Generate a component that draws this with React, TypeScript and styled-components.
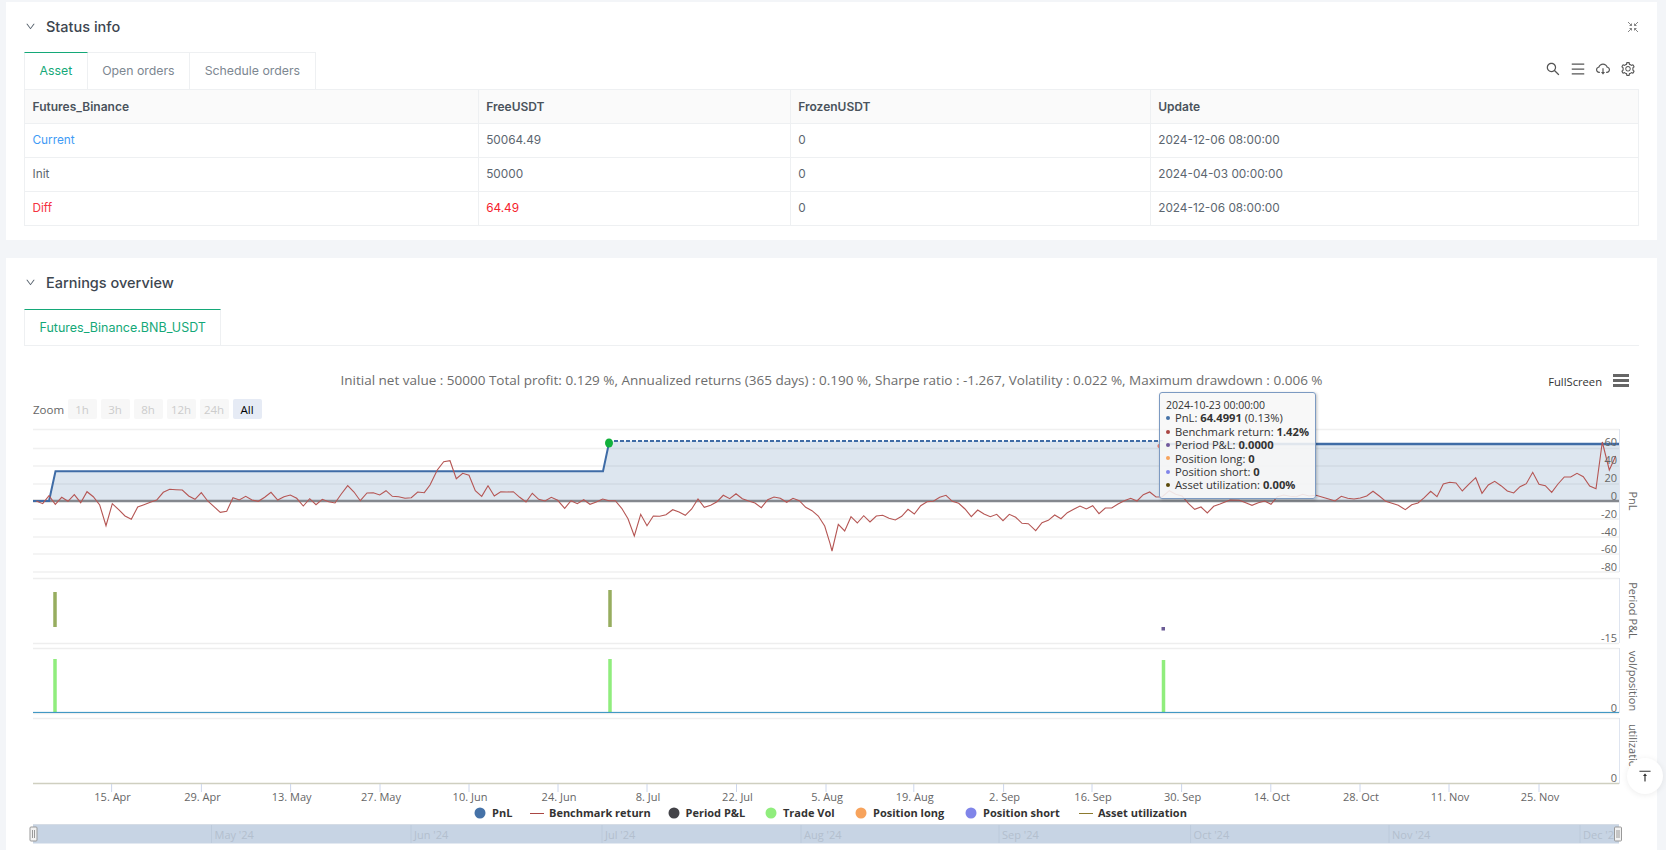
import React from "react";
import styled, { createGlobalStyle } from "styled-components";
import {
  AiOutlineCloudDownload,
  AiOutlineDown,
  AiOutlineMenu,
  AiOutlineSearch,
  AiOutlineSetting,
  AiOutlineVerticalAlignTop,
} from "react-icons/ai";

const GlobalStyle = createGlobalStyle`
  html, body {
    margin: 0;
    height: 850px;
    overflow: hidden;
    background: #f3f5f8;
    font-family: Inter, "Liberation Sans", sans-serif;
  }
`;

const chartFont = `"Open Sans", "Liberation Sans", sans-serif`;

const Page = styled.div`
  position: relative;
  height: 850px;
  padding: 2px 9px 0 6px;
  box-sizing: border-box;
  display: flex;
  flex-direction: column;
  gap: 18px;
  overflow: hidden;
`;

const Card = styled.section<{ $grow?: boolean }>`
  background: #fff;
  padding: 0 18px 14.5px;
  flex: ${(p) => (p.$grow ? "1" : "none")};
`;

const CardHeader = styled.header`
  height: 50px;
  box-sizing: border-box;
  padding-bottom: 1px;
  display: flex;
  align-items: center;
  gap: 10px;
  color: #3d4650;
  font-size: 14.5px;
  font-weight: 500;
  svg {
    margin-left: 1px;
    margin-right: 0;
    color: #5a6570;
    font-size: 11px;
  }
`;

const CollapseIcon = styled.svg`
  margin-left: auto !important;
  margin-right: 0 !important;
  width: 12px;
  height: 12px;
  stroke: #777;
  stroke-width: 0.9;
  fill: none;
`;

const TabRow = styled.div<{ $line?: boolean; $offset?: number }>`
  display: flex;
  align-items: flex-start;
  height: ${(p) => (p.$line ? 36 : 37)}px;
  margin-top: ${(p) => p.$offset ?? 0}px;
  font-size: ${(p) => (p.$line ? 12.5 : 12.3)}px;
  border-bottom: ${(p) => (p.$line ? "1px solid #eef0f2" : "none")};
`;

const Tab = styled.div<{ $active?: boolean }>`
  height: 100%;
  box-sizing: border-box;
  padding: 0 14.5px 1px;
  display: flex;
  align-items: center;
  color: ${(p) => (p.$active ? "#14a878" : "#7d8791")};
  border: 1px solid #eef0f2;
  border-left-width: ${(p) => (p.$active ? 1 : 0)}px;
  border-bottom: none;
  border-top: ${(p) => (p.$active ? "1px solid #14a878" : "1px solid #eef0f2")};
`;

const ToolIcons = styled.div`
  margin-left: auto;
  display: flex;
  gap: 9px;
  padding: 9px 3px 0 0;
  color: #555;
  font-size: 16px;
  line-height: 0;
`;

const Table = styled.table`
  width: 100%;
  border-collapse: collapse;
  table-layout: fixed;
  font-size: 11.8px;
  color: #5c6670;
`;

const HeadCell = styled.th`
  height: 32.5px;
  padding: 0 7.5px;
  text-align: left;
  font-size: 12px;
  font-weight: 600;
  color: #4a535c;
  background: #fafafa;
  border: 1px solid #eef0f2;
`;

const Cell = styled.td<{ $tone?: string }>`
  height: 33px;
  padding: 0 7.5px;
  color: ${(p) => p.$tone ?? "#5c6670"};
  border: 1px solid #eef0f2;
`;

const ChartArea = styled.div`
  position: relative;
`;

const SummaryRow = styled.div`
  display: grid;
  grid-template-columns: 1fr auto 1fr;
  align-items: center;
  height: 20px;
  padding-top: 24px;
  font-family: ${chartFont};
`;

const SummaryText = styled.div`
  grid-column: 2;
  font-size: 13.5px;
  color: #6d6d6d;
  white-space: nowrap;
`;

const ChartMenu = styled.div`
  grid-column: 3;
  justify-self: end;
  display: flex;
  align-items: center;
  gap: 11px;
  padding-right: 10px;
  font-size: 11.2px;
  color: #333;
  span {
    padding-top: 2px;
  }
`;

const MenuBars = styled.div`
  width: 16px;
  height: 13px;
  display: flex;
  flex-direction: column;
  justify-content: space-between;
  i {
    height: 3px;
    background: #666;
  }
`;

const RangeRow = styled.div`
  display: flex;
  align-items: center;
  gap: 4px;
  height: 20px;
  margin-top: 9px;
  padding-left: 9px;
  font-family: ${chartFont};
  font-size: 11.5px;
`;

const RangeLabel = styled.span`
  width: 30.5px;
  color: #666;
`;

const RangeButton = styled.span<{ $active?: boolean }>`
  width: 29px;
  height: 20px;
  display: flex;
  align-items: center;
  justify-content: center;
  border-radius: 2px;
  color: ${(p) => (p.$active ? "#000" : "#ccc")};
  background: ${(p) => (p.$active ? "#e6ebf5" : "#f7f7f7")};
`;

const ChartSvg = styled.svg`
  display: block;
  margin-top: 5px;
  overflow: visible;
  font-family: ${chartFont};
`;

const Tooltip = styled.div`
  position: absolute;
  left: 1135px;
  top: 46px;
  width: 157px;
  height: 107px;
  box-sizing: border-box;
  padding: 6px 0 0 6px;
  font-family: ${chartFont};
  font-size: 11.2px;
  line-height: 13.4px;
  color: #333;
  background: rgba(247, 247, 247, 0.88);
  border: 1px solid #7c9ac2;
  border-radius: 3px;
  box-shadow: 1px 1px 3px rgba(0, 0, 0, 0.25);
  white-space: nowrap;
`;

const TipDate = styled.div`
  font-size: 10.5px;
  line-height: 12.4px;
`;

const TipRow = styled.div`
  display: flex;
  align-items: center;
  gap: 5px;
  span {
    display: block;
  }
  b {
    font-weight: 700;
  }
`;

const TipDot = styled.i<{ $color: string }>`
  width: 4px;
  height: 4px;
  border-radius: 50%;
  background: ${(p) => p.$color};
  flex: none;
`;

const BackTop = styled.div`
  position: absolute;
  left: 1627px;
  top: 758px;
  width: 36px;
  height: 36px;
  border-radius: 50%;
  background: #fff;
  box-shadow: 0 1px 6px rgba(0, 0, 0, 0.08);
  display: flex;
  align-items: center;
  justify-content: center;
  color: #333;
  font-size: 16px;
`;

type Seg = [number, number, [number, number][]];

// traced from the picture, crops were 3x so x/y are divided back
const benchmark: Seg[] = [
  [30, 440, [[19,183],[38,191],[57,167],[76,193],[95,172],[114,184],[133,164],[152,188],[171,155],[190,170],[209,195],[228,257],[247,191],[266,209],[285,228],[304,238],[323,201],[342,194],[361,187],[380,180],[400,157],[419,148],[438,149],[457,150],[476,168],[495,178],[514,158],[533,183],[552,200],[571,217],[590,214],[609,173],[628,180],[647,169],[666,180],[685,184],[704,172],[723,157],[743,180],[762,170],[781,165],[800,175],[820,198],[839,176],[858,194],[877,178],[896,185],[915,189],[934,162],[953,137],[972,156],[991,182],[1011,159],[1030,158],[1049,165],[1068,152],[1087,169],[1106,170],[1125,175],[1144,173],[1163,156],[1183,158]]],
  [430, 440, [[0,135],[22,90],[41,65],[60,62],[79,116],[98,100],[117,106],[136,152],[155,169],[174,137],[193,168],[212,155],[231,156],[250,155],[269,172],[288,186],[307,160],[326,178],[345,183],[364,172],[383,181],[404,205],[423,182],[442,191],[461,179],[480,193],[499,186],[518,177],[537,182],[556,182],[575,205],[594,236],[613,288],[632,223],[651,257],[670,228],[689,229],[708,224],[728,209],[747,216],[766,226],[785,207],[804,177],[823,202],[842,196],[861,185],[880,166],[899,176],[918,161],[937,176],[956,183],[975,189],[994,203],[1013,179],[1032,171],[1051,175],[1070,187],[1089,175],[1108,182],[1127,202],[1146,212],[1165,228],[1184,258]]],
  [830, 440, [[0,310],[6,333],[25,253],[44,273],[63,230],[82,249],[101,227],[120,246],[139,228],[158,226],[177,235],[196,240],[215,229],[234,208],[253,222],[272,197],[291,185],[310,184],[329,172],[348,166],[367,184],[386,190],[405,207],[424,230],[443,210],[462,222],[481,230],[500,223],[519,242],[538,223],[557,232],[576,250],[595,251],[617,272],[636,248],[655,241],[674,225],[693,236],[712,218],[731,208],[750,198],[769,207],[788,197],[807,221],[826,204],[845,204],[864,192],[883,182],[902,175],[921,183],[940,164],[959,156],[978,171],[997,170],[1018,152],[1037,163],[1056,168],[1075,190],[1094,208],[1113,201],[1132,219],[1151,199],[1170,192]]],
  [1230, 430, [[0,210],[28,211],[47,218],[66,226],[85,218],[104,213],[123,223],[142,200],[161,195],[180,199],[199,200],[218,193],[237,198],[258,196],[296,207],[315,213],[334,199],[353,205],[372,207],[391,204],[410,198],[429,184],[448,198],[467,214],[486,220],[505,226],[526,239],[545,224],[564,219],[583,203],[602,184],[621,200],[640,162],[659,157],[678,159],[697,183],[716,163],[737,143],[756,190],[775,165],[794,154],[813,167],[832,183],[851,189],[870,170],[889,161],[908,127],[927,163],[946,167],[965,187],[984,162],[1003,141],[1022,141],[1041,130],[1060,140],[1079,168],[1098,176],[1117,36],[1138,120],[1157,78]]],
];

const benchmarkPoints = benchmark
  .flatMap(([ox, oy, pts]) => pts.map(([x, y]) => `${(ox + x / 3).toFixed(1)},${(oy + y / 3).toFixed(1)}`))
  .join(" ");

const gridLines = [429.5, 448.5, 466, 484, 519, 537, 554, 572];
const paneLines = [578.5, 643.5, 648.5, 713.5, 718.5];
const ticks: [number, string][] = [
  [111.6, "15. Apr"], [201.4, "29. Apr"], [290.6, "13. May"], [380, "27. May"], [469, "10. Jun"], [558, "24. Jun"],
  [647, "8. Jul"], [736.5, "22. Jul"], [826, "5. Aug"], [913.8, "19. Aug"], [1003.6, "2. Sep"], [1092, "16. Sep"],
  [1181.6, "30. Sep"], [1270.8, "14. Oct"], [1360, "28. Oct"], [1449, "11. Nov"], [1539, "25. Nov"],
];
const yLabels: [number, string][] = [
  [446, "60"], [464, "40"], [482, "20"], [500, "0"], [518, "-20"], [536, "-40"], [553, "-60"], [571, "-80"],
  [642, "-15"], [712, "0"], [782, "0"],
];
const navLabels: [number, string][] = [
  [211.5, "May '24"], [411, "Jun '24"], [602, "Jul '24"], [801, "Aug '24"], [999, "Sep '24"], [1190.6, "Oct '24"], [1389, "Nov '24"], [1580, "Dec '24"],
];
const legendDots: [number, string, number, string][] = [
  [480, "#4572a7", 492, "PnL"],
  [674, "#434348", 685.5, "Period P&L"],
  [771, "#90ed7d", 783, "Trade Vol"],
  [861, "#f7a35c", 873, "Position long"],
  [971, "#8085e9", 983, "Position short"],
];
const bars: [number, number, number, string][] = [
  [55, 592, 35, "#97ad5f"],
  [610, 590, 37, "#97ad5f"],
  [55, 659, 53, "#90ed7d"],
  [610, 659, 53, "#90ed7d"],
  [1163.5, 660, 52, "#90ed7d"],
];
const axisTitles: [number, string][] = [
  [501, "PnL"], [610.5, "Period P&L"], [681, "vol/position"], [750, "utilizatio..."],
];
const tipRows: [string, React.ReactNode][] = [
  ["#4572a7", <>PnL: <b>64.4991</b> (0.13%)</>],
  ["#aa4643", <>Benchmark return: <b>1.42%</b></>],
  ["#6f5a9b", <>Period P&L: <b>0.0000</b></>],
  ["#f7a35c", <>Position long: <b>0</b></>],
  ["#8085e9", <>Position short: <b>0</b></>],
  ["#5b4a0a", <>Asset utilization: <b>0.00%</b></>],
];

function Handle({ x }: { x: number }) {
  return (
    <g>
      <rect x={x} y={827} width={7} height={14} rx={1} fill="#f2f2f2" stroke="#999" />
      <path d={`M${x + 2.5} 830V838M${x + 4.5} 830V838`} stroke="#999" />
    </g>
  );
}

function Chart() {
  return (
    <ChartSvg width={1615} height={426} viewBox="24 424 1615 426">
      {gridLines.map((y) => (
        <line key={y} x1={33} x2={1619} y1={y} y2={y} stroke="#f0f0f0" strokeWidth={1.5} />
      ))}
      {paneLines.map((y) => (
        <line key={y} x1={33} x2={1619} y1={y} y2={y} stroke="#eeeeee" strokeWidth={1.5} />
      ))}
      <path d="M1619.5 429V572M1619.5 578V643M1619.5 648V713M1619.5 718V784" stroke="#dfe5f0" fill="none" />

      <path d="M33 501H49L55.5 471.3H603L609 441H1163V444H1619V501Z" fill="#4572a7" fillOpacity={0.18} />
      <line x1={33} x2={1619} y1={501} y2={501} stroke="#84888e" strokeWidth={2.5} />
      <path d="M33 501H49L55.5 471.3H603L609 443" stroke="#3f6ca6" strokeWidth={2} fill="none" />
      <line x1={614} x2={1163} y1={441} y2={441} stroke="#3f6ca6" strokeWidth={2} strokeDasharray="4 2" />
      <line x1={1163} x2={1619} y1={444} y2={444} stroke="#3f6ca6" strokeWidth={2.5} />
      <polyline points={benchmarkPoints} fill="none" stroke="#b55654" strokeWidth={1.1} />
      <ellipse cx={609} cy={443} rx={4} ry={4.5} fill="#12b13c" />
      <circle cx={1159.5} cy={446} r={2} fill="#e8433d" />
      <circle cx={1164} cy={446} r={5.5} fill="#cfe8c8" />

      {bars.map(([x, y, h, color]) => (
        <rect key={`${x}-${y}`} x={x - 1.75} y={y} width={3.5} height={h} fill={color} />
      ))}
      <rect x={1161.5} y={627} width={3.5} height={3.5} fill="#6b5b95" />
      <line x1={33} x2={1619} y1={712.4} y2={712.4} stroke="#2b8cbe" strokeWidth={1} />
      <line x1={33} x2={1619} y1={783.5} y2={783.5} stroke="#cfcfc0" strokeWidth={1.5} />

      {ticks.map(([x, label]) => (
        <g key={label}>
          <line x1={x} x2={x} y1={784} y2={792} stroke="#ccd6eb" />
          <text x={x + 1} y={801} textAnchor="middle" fontSize={11} fill="#666">{label}</text>
        </g>
      ))}
      {yLabels.map(([y, label]) => (
        <text key={`${y}${label}`} x={1617} y={y} textAnchor="end" fontSize={11} fill="#666">{label}</text>
      ))}
      {axisTitles.map(([y, label]) => (
        <text key={label} transform={`translate(1628.5 ${y}) rotate(90)`} textAnchor="middle" fontSize={11} fill="#666">{label}</text>
      ))}

      {legendDots.map(([cx, color, tx, label]) => (
        <g key={label}>
          <ellipse cx={cx} cy={813} rx={5.5} ry={5.5} fill={color} />
          <text x={tx} y={817} fontSize={11} fontWeight={700} fill="#333">{label}</text>
        </g>
      ))}
      <line x1={530} x2={544} y1={813.5} y2={813.5} stroke="#aa4643" />
      <text x={549} y={817} fontSize={11} fontWeight={700} fill="#333">Benchmark return</text>
      <line x1={1079} x2={1093} y1={813.5} y2={813.5} stroke="#8c7a2e" />
      <text x={1098} y={817} fontSize={11} fontWeight={700} fill="#333">Asset utilization</text>

      <rect x={33} y={824.5} width={1586} height={19} fill="#c7d4e4" />
      <line x1={33} x2={1619} y1={824.5} y2={824.5} stroke="#d5dce5" />
      {navLabels.map(([x, label]) => (
        <g key={label}>
          <line x1={x} x2={x} y1={825} y2={843} stroke="#bccadb" />
          <text x={x + 3} y={839} fontSize={11} fill="#b3bfce">{label}</text>
        </g>
      ))}
      <Handle x={30} />
      <Handle x={1614.5} />
    </ChartSvg>
  );
}

export default function App() {
  return (
    <>
      <GlobalStyle />
      <Page>
        <Card>
          <CardHeader>
            <AiOutlineDown />
            Status info
            <CollapseIcon viewBox="0 0 12 12">
              <path d="M1 1L4.5 4.5M4.5 2.5V4.5H2.5M11 1L7.5 4.5M7.5 2.5V4.5H9.5M1 11L4.5 7.5M4.5 9.5V7.5H2.5M11 11L7.5 7.5M7.5 9.5V7.5H9.5" />
            </CollapseIcon>
          </CardHeader>
          <TabRow>
            <Tab $active>Asset</Tab>
            <Tab>Open orders</Tab>
            <Tab>Schedule orders</Tab>
            <ToolIcons>
              <AiOutlineSearch />
              <AiOutlineMenu />
              <AiOutlineCloudDownload />
              <AiOutlineSetting />
            </ToolIcons>
          </TabRow>
          <Table>
            <colgroup>
              <col width="453.7" />
              <col width="312" />
              <col width="360" />
              <col />
            </colgroup>
            <thead>
              <tr>
                <HeadCell>Futures_Binance</HeadCell>
                <HeadCell>FreeUSDT</HeadCell>
                <HeadCell>FrozenUSDT</HeadCell>
                <HeadCell>Update</HeadCell>
              </tr>
            </thead>
            <tbody>
              <tr>
                <Cell $tone="#3f9bf5">Current</Cell>
                <Cell>50064.49</Cell>
                <Cell>0</Cell>
                <Cell>2024-12-06 08:00:00</Cell>
              </tr>
              <tr>
                <Cell>Init</Cell>
                <Cell>50000</Cell>
                <Cell>0</Cell>
                <Cell>2024-04-03 00:00:00</Cell>
              </tr>
              <tr>
                <Cell $tone="#f5333f">Diff</Cell>
                <Cell $tone="#f5222d">64.49</Cell>
                <Cell>0</Cell>
                <Cell>2024-12-06 08:00:00</Cell>
              </tr>
            </tbody>
          </Table>
        </Card>
        <Card $grow>
          <CardHeader>
            <AiOutlineDown />
            Earnings overview
          </CardHeader>
          <TabRow $line $offset={1}>
            <Tab $active>Futures_Binance.BNB_USDT</Tab>
          </TabRow>
          <ChartArea>
            <SummaryRow>
              <SummaryText>
                Initial net value : 50000 Total profit: 0.129 %, Annualized returns (365 days) : 0.190 %, Sharpe ratio : -1.267, Volatility : 0.022 %, Maximum drawdown : 0.006 %
              </SummaryText>
              <ChartMenu>
                <span>FullScreen</span>
                <MenuBars>
                  <i />
                  <i />
                  <i />
                </MenuBars>
              </ChartMenu>
            </SummaryRow>
            <RangeRow>
              <RangeLabel>Zoom</RangeLabel>
              <RangeButton>1h</RangeButton>
              <RangeButton>3h</RangeButton>
              <RangeButton>8h</RangeButton>
              <RangeButton>12h</RangeButton>
              <RangeButton>24h</RangeButton>
              <RangeButton $active>All</RangeButton>
            </RangeRow>
            <Chart />
            <Tooltip>
              <TipDate>2024-10-23 00:00:00</TipDate>
              {tipRows.map(([color, row], i) => (
                <TipRow key={i}>
                  <TipDot $color={color} />
                  <span>{row}</span>
                </TipRow>
              ))}
            </Tooltip>
          </ChartArea>
        </Card>
        <BackTop>
          <AiOutlineVerticalAlignTop />
        </BackTop>
      </Page>
    </>
  );
}
